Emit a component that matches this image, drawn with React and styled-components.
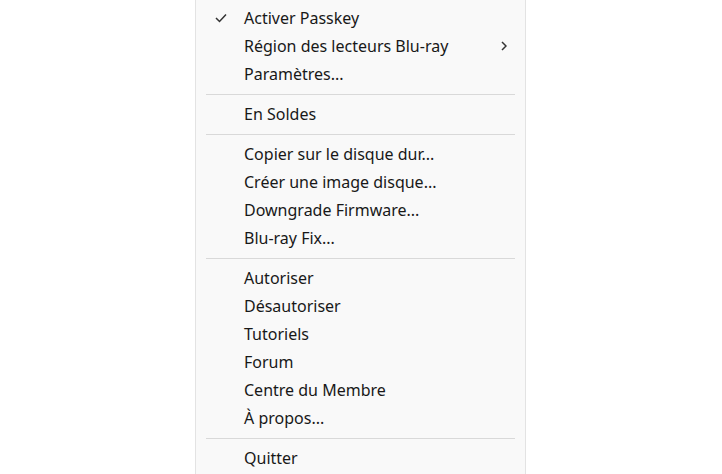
import styled, { createGlobalStyle } from 'styled-components';

const Global = createGlobalStyle`
  html, body {
    margin: 0;
    background: #ffffff;
  }
  body {
    font-family: "Noto Sans", "Open Sans", sans-serif;
  }
`;

const Page = styled.div`
  width: 722px;
  height: 474px;
  overflow: hidden;
  background: #ffffff;
`;

const Menu = styled.div`
  margin-left: 195px;
  width: 329px;
  height: 490px;
  background: #f9f9f9;
  border-left: 1px solid #e3e3e3;
  border-right: 1px solid #e3e3e3;
  padding-top: 4px;
  box-sizing: content-box;
`;

const Group = styled.div``;

const Item = styled.div`
  display: grid;
  grid-template-columns: 48px 1fr 28px;
  align-items: center;
  height: 28px;
  font-size: 16px;
  color: #181818;
`;

const Check = styled.span`
  display: flex;
  justify-content: center;
  padding-left: 2px;
`;

const Arrow = styled.span`
  display: flex;
  justify-content: flex-start;
  padding-left: 4px;
`;

const Separator = styled.div`
  height: 1px;
  background: #d9d9d9;
  margin: 6px 10px 5px 10px;
`;

const CheckIcon = () => (
  <svg width="12" height="10" viewBox="0 0 12 10">
    <polyline points="1,5 4.5,8.5 11,1.5" fill="none" stroke="#333" strokeWidth="1.5" />
  </svg>
);

const ChevronIcon = () => (
  <svg width="6" height="10" viewBox="0 0 6 10">
    <polyline points="1,1 5,5 1,9" fill="none" stroke="#333" strokeWidth="1.5" />
  </svg>
);

const groups = [
  [
    { label: 'Activer Passkey', checked: true },
    { label: 'Région des lecteurs Blu-ray', sub: true },
    { label: 'Paramètres...' },
  ],
  [{ label: 'En Soldes' }],
  [
    { label: 'Copier sur le disque dur...' },
    { label: 'Créer une image disque...' },
    { label: 'Downgrade Firmware...' },
    { label: 'Blu-ray Fix...' },
  ],
  [
    { label: 'Autoriser' },
    { label: 'Désautoriser' },
    { label: 'Tutoriels' },
    { label: 'Forum' },
    { label: 'Centre du Membre' },
    { label: 'À propos...' },
  ],
  [{ label: 'Quitter' }],
];

export default function App() {
  return (
    <Page>
      <Global />
      <Menu>
        {groups.map((group, gi) => (
          <Group key={gi}>
            {gi > 0 && <Separator />}
            {group.map((it) => (
              <Item key={it.label}>
                <Check>{it.checked && <CheckIcon />}</Check>
                <span>{it.label}</span>
                <Arrow>{it.sub && <ChevronIcon />}</Arrow>
              </Item>
            ))}
          </Group>
        ))}
      </Menu>
    </Page>
  );
}
